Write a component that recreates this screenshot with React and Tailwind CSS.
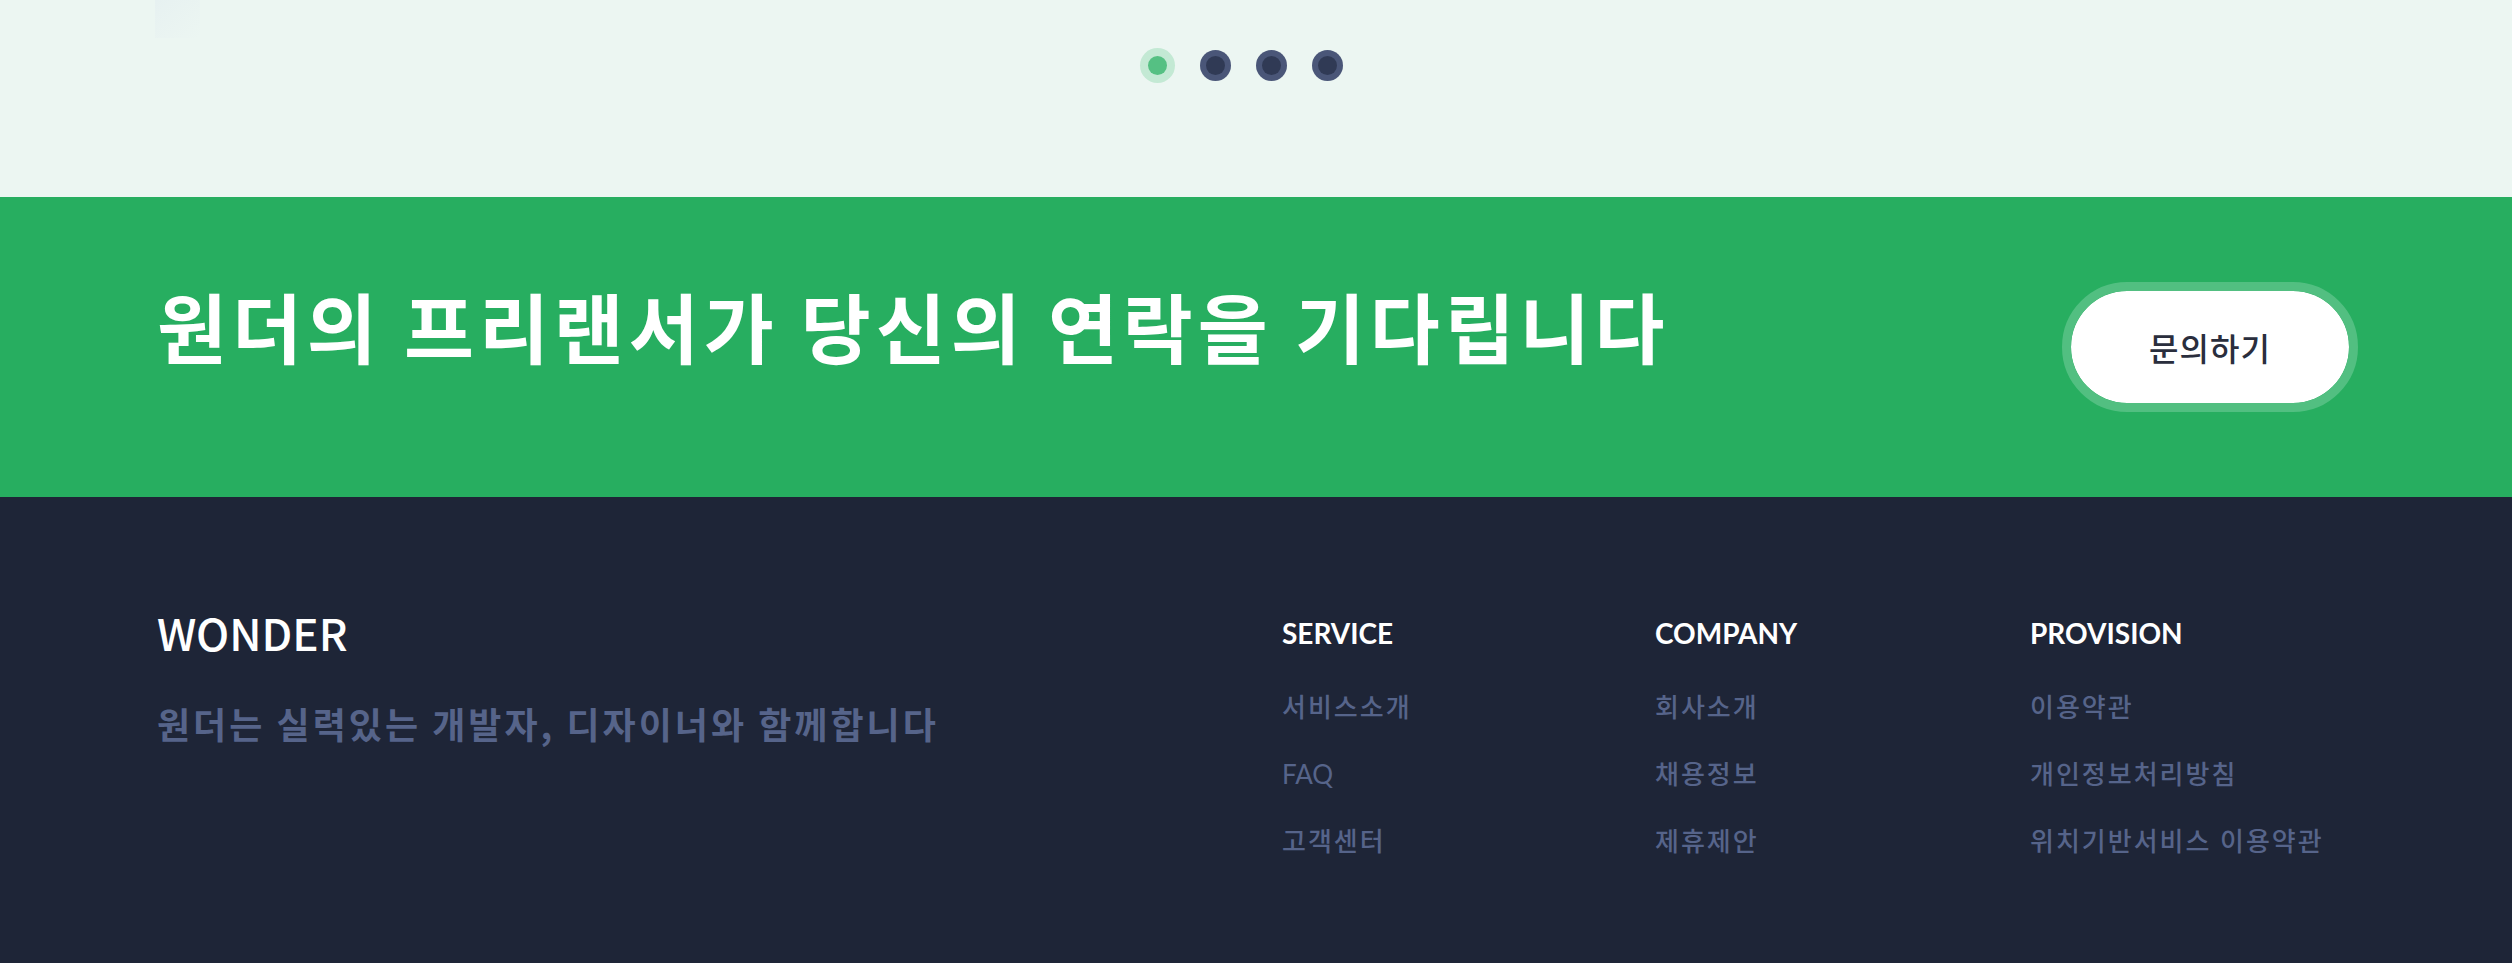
import React from 'react';

const KR = { fontFamily: '"Noto Sans CJK KR", "Noto Sans", sans-serif' };
const LATIN_KR = { fontFamily: 'Lato, "Noto Sans CJK KR", sans-serif' };

const columns = [
    { title: 'SERVICE', width: 'w-[373px]', items: ['서비스소개', 'FAQ', '고객센터'] },
    { title: 'COMPANY', width: 'w-[375px]', items: ['회사소개', '채용정보', '제휴제안'] },
    { title: 'PROVISION', width: 'flex-1', items: ['이용약관', '개인정보처리방침', '위치기반서비스 이용약관'] },
];

const Dots = () => (
    <div className="flex items-center gap-[25px] pl-[1140px] mt-[10px]">
        <span className="w-[35px] h-[35px] rounded-full bg-[#c3e9d4] flex items-center justify-center">
            <span className="w-[19px] h-[19px] rounded-full bg-[#55c083]"></span>
        </span>
        {[0, 1, 2].map((i) => (
            <span key={i} className="w-[31px] h-[31px] rounded-full bg-[#4a5678] flex items-center justify-center">
                <span className="w-[19px] h-[19px] rounded-full bg-[#303a55]"></span>
            </span>
        ))}
    </div>
);

const App = () => {
    return (
        <div className="w-[2512px] h-[963px] flex flex-col overflow-hidden" style={KR}>
            {/* carousel bottom */}
            <section className="h-[197px] shrink-0 bg-[#ecf6f2]">
                <div className="ml-[155px] w-[45px] h-[38px] bg-gradient-to-br from-[#e7f1f1] to-transparent"></div>
                <Dots />
            </section>

            {/* contact banner */}
            <section className="h-[300px] shrink-0 bg-[#27ae60] flex items-center justify-between pl-[157px] pr-[154px]">
                <h2 className="text-[76px] leading-none font-bold tracking-[5px] text-white mb-[44px]">
                    원더의 프리랜서가 당신의 연락을 기다립니다
                </h2>
                <button className="w-[296px] h-[130px] rounded-full border-[9px] border-[#52bf81] bg-white bg-clip-padding flex items-center justify-center text-[32px] font-medium tracking-[1px] text-[#2a2e3d]">
                    문의하기
                </button>
            </section>

            {/* footer */}
            <footer className="flex-1 bg-[#1e2537] flex pl-[157px]">
                <div className="w-[1125px] shrink-0 pt-[113px]">
                    <div className="text-[44px] leading-none font-medium text-white">WONDER</div>
                    <p className="mt-[51px] text-[36px] leading-none font-bold tracking-[3px] text-[#56648a]">
                        원더는 실력있는 개발자, 디자이너와 함께합니다
                    </p>
                </div>
                {columns.map((col) => (
                    <div key={col.title} className={`${col.width} pt-[122px]`}>
                        <h4 className="text-[28px] leading-none font-bold text-white" style={LATIN_KR}>
                            {col.title}
                        </h4>
                        <ul className="mt-[47px] flex flex-col gap-[41px]">
                            {col.items.map((item) => (
                                <li
                                    key={item}
                                    className={`text-[26px] leading-none text-[#56648a] ${item === 'FAQ' ? 'font-normal' : 'font-medium tracking-[2px]'}`}
                                    style={LATIN_KR}
                                >
                                    {item}
                                </li>
                            ))}
                        </ul>
                    </div>
                ))}
            </footer>
        </div>
    );
};

export default App;
